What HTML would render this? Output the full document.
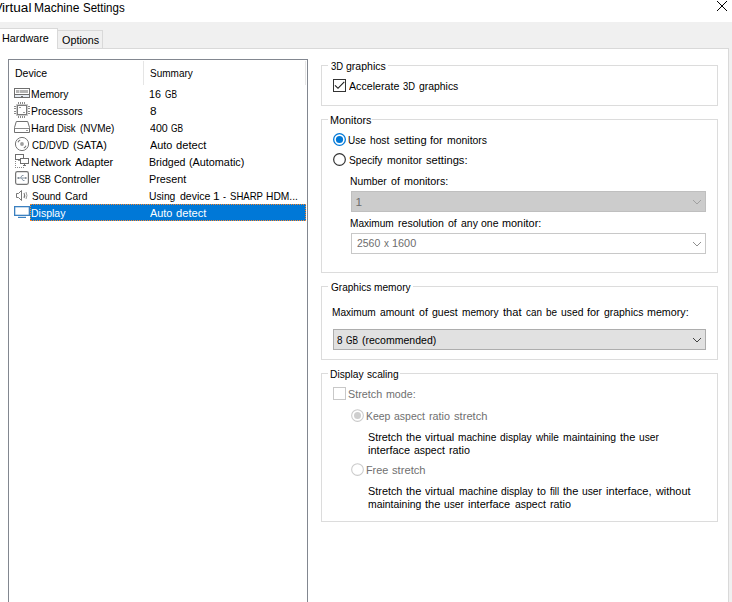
<!DOCTYPE html>
<html><head><meta charset="utf-8">
<style>
html,body{margin:0;padding:0;}
body{width:732px;height:602px;overflow:hidden;background:#f0f0f0;position:relative;font-family:"Liberation Sans",sans-serif;font-size:11.75px;color:#000;}
.a{position:absolute;}
.t{position:absolute;white-space:nowrap;line-height:13px;height:13px;transform-origin:0 0;margin-top:-1px;}
.g{color:#707070;}
.gb{position:absolute;border:1px solid #dcdcdc;box-sizing:border-box;}
.gl{position:absolute;background:#fff;white-space:nowrap;line-height:13px;height:13px;padding:0 2px;}
</style></head><body>
<!-- title bar -->
<div class="a" style="left:0;top:0;width:732px;height:22px;background:#fff;"></div>
<div class="t" id="t0" style="transform:scaleX(1.0);left:-5.8px;font-size:12.5px;line-height:15px;height:15px;top:1.6px;">V</div><div class="t" id="t1" style="transform:scaleX(1.085);left:2.3px;font-size:12.5px;line-height:15px;height:15px;top:1.6px;">irtual</div><div class="t" id="t2" style="transform:scaleX(0.961);left:34.2px;font-size:12.5px;line-height:15px;height:15px;top:1.6px;">Machine</div><div class="t" id="t3" style="transform:scaleX(0.923);left:82.8px;font-size:12.5px;line-height:15px;height:15px;top:1.6px;">Settings</div>
<svg class="a" style="left:716px;top:0;" width="12" height="12" viewBox="0 0 12 12"><path d="M1 1 L11 11 M11 1 L1 11" stroke="#000" stroke-width="1" fill="none"/></svg>
<!-- tab page -->
<div class="a" style="left:-1px;top:48px;width:730px;height:560px;background:#fff;border:1px solid #d9d9d9;box-sizing:border-box;"></div>
<!-- tabs -->
<div class="a" style="left:-1px;top:28px;width:59px;height:21px;background:#fff;border:1px solid #d9d9d9;border-bottom:none;box-sizing:border-box;"></div>
<div class="a" style="left:57px;top:30px;width:46px;height:18px;background:#f0f0f0;border:1px solid #d9d9d9;border-bottom:none;box-sizing:border-box;"></div>
<div class="t" id="tab1_0" style="transform:scaleX(0.9180);left:1.98px;top:32px;">Hardware</div>
<div class="t" id="tab2_0" style="transform:scaleX(0.9175);left:61.80px;top:34px;">Options</div>
<!-- list view -->
<div class="a" style="left:8px;top:59px;width:300px;height:560px;border:1px solid #828790;box-sizing:border-box;background:#fff;"></div>
<div class="a" style="left:143px;top:61px;width:1px;height:24px;background:#e5e5e5;"></div>
<div class="a" style="left:305px;top:61px;width:1px;height:24px;background:#e5e5e5;"></div>
<div class="t" id="h1_0" style="transform:scaleX(0.8943);left:14.81px;top:67px;">Device</div>
<div class="t" id="h2_0" style="transform:scaleX(0.8510);left:149.50px;top:67px;">Summary</div>
<div class="a" style="left:30px;top:204px;width:276px;height:17px;background:#0078d7;"></div>
<div class="a" style="left:30px;top:204px;width:276px;height:17px;box-sizing:border-box;border:1px dotted #ff8728;"></div>
<div class="t" id="r1_0" style="transform:scaleX(0.8833);left:31.42px;top:88px;">Memory</div>
<div class="t" id="r2_0" style="transform:scaleX(0.8810);left:31.42px;top:105px;">Processors</div>
<div class="t" id="r3_0" style="transform:scaleX(0.9144);left:31.39px;top:122px;">Hard</div><div class="t" id="r3_1" style="transform:scaleX(0.8162);left:57.42px;top:122px;">Disk</div><div class="t" id="r3_2" style="transform:scaleX(0.8479);left:80.18px;top:122px;">(NVMe)</div>
<div class="t" id="r4_0" style="transform:scaleX(0.8233);left:32.30px;top:139px;">CD/DVD</div><div class="t" id="r4_1" style="transform:scaleX(0.9179);left:73.36px;top:139px;">(SATA)</div>
<div class="t" id="r5_0" style="transform:scaleX(0.9286);left:31.37px;top:156px;">Network</div><div class="t" id="r5_1" style="transform:scaleX(0.9268);left:75.30px;top:156px;">Adapter</div>
<div class="t" id="r6_0" style="transform:scaleX(0.7838);left:31.52px;top:173px;">USB</div><div class="t" id="r6_1" style="transform:scaleX(0.9033);left:54.33px;top:173px;">Controller</div>
<div class="t" id="r7_0" style="transform:scaleX(0.8514);left:32.30px;top:190px;">Sound</div><div class="t" id="r7_1" style="transform:scaleX(0.8784);left:65.24px;top:190px;">Card</div>
<div class="t" id="r8_0" style="transform:scaleX(0.8921);left:31.41px;top:207px;color:#fff;">Display</div>
<div class="t" id="s1_0" style="transform:scaleX(0.9133);left:149.19px;top:88px;">16</div><div class="t" id="s1_1" style="transform:scaleX(0.7033);left:165.04px;top:88px;">GB</div>
<div class="t" id="s2" style="transform:scaleX(1.0000);left:150px;top:105px;">8</div>
<div class="t" id="s3_0" style="transform:scaleX(0.9029);left:150.00px;top:122px;">400</div><div class="t" id="s3_1" style="transform:scaleX(0.7123);left:171.19px;top:122px;">GB</div>
<div class="t" id="s4_0" style="transform:scaleX(0.9265);left:150.00px;top:139px;">Auto</div><div class="t" id="s4_1" style="transform:scaleX(0.9475);left:176.28px;top:139px;">detect</div>
<div class="t" id="s5_0" style="transform:scaleX(0.9013);left:149.10px;top:156px;">Bridged</div><div class="t" id="s5_1" style="transform:scaleX(0.9206);left:189.17px;top:156px;">(Automatic)</div>
<div class="t" id="s6_0" style="transform:scaleX(0.9200);left:149.08px;top:173px;">Present</div>
<div class="t" id="s7_0" style="transform:scaleX(0.8769);left:149.12px;top:190px;">Using</div><div class="t" id="s7_1" style="transform:scaleX(0.8976);left:179.50px;top:190px;">device</div><div class="t" id="s7_2" style="transform:scaleX(1.0172);left:213.07px;top:190px;">1</div><div class="t" id="s7_3" style="transform:scaleX(0.7629);left:223.24px;top:190px;">-</div><div class="t" id="s7_4" style="transform:scaleX(0.8138);left:230.36px;top:190px;">SHARP</div><div class="t" id="s7_5" style="transform:scaleX(0.8719);left:266.11px;top:190px;">HDM...</div>
<div class="t" id="s8_0" style="transform:scaleX(0.9265);left:150.00px;top:207px;color:#fff;">Auto</div><div class="t" id="s8_1" style="transform:scaleX(0.9475);left:176.28px;top:207px;color:#fff;">detect</div>
<!-- icons placeholder -->

<svg class="a" style="left:0;top:0;" width="40" height="230" viewBox="0 0 40 230">
<!-- memory -->
<g fill="none" stroke="#6e6e6e" stroke-width="1" shape-rendering="crispEdges">
<rect x="14.5" y="88.5" width="15" height="9" fill="#fff"/>
<rect x="15" y="95" width="14" height="2" fill="#e6ecf3" stroke="none"/>
<line x1="14" y1="94.5" x2="30" y2="94.5"/>
<rect x="16" y="90" width="12" height="3" fill="#b4b4b4" stroke="none"/>
<rect x="19.4" y="90" width="0.8" height="3" fill="#dcdcdc" stroke="none"/>
<rect x="23.6" y="90" width="0.8" height="3" fill="#dcdcdc" stroke="none"/>
<rect x="21" y="96" width="2" height="1" fill="#6e6e6e" stroke="none"/>
</g>
<!-- processor -->
<g shape-rendering="crispEdges">
<rect x="16.5" y="104.5" width="11" height="11" fill="none" stroke="#c8c8c8"/>
<rect x="17.5" y="105.5" width="9" height="9" fill="#fff" stroke="#7a7a7a"/>
<g fill="#8a8a8a">
<rect x="18" y="102" width="1" height="2"/><rect x="20" y="102" width="1" height="2"/><rect x="22" y="102" width="1" height="2"/><rect x="24" y="102" width="1" height="2"/>
<rect x="18" y="116" width="1" height="2"/><rect x="20" y="116" width="1" height="2"/><rect x="22" y="116" width="1" height="2"/><rect x="24" y="116" width="1" height="2"/>
<rect x="14" y="106" width="2" height="1"/><rect x="14" y="108" width="2" height="1"/><rect x="14" y="111" width="2" height="1"/><rect x="14" y="113" width="2" height="1"/>
<rect x="28" y="106" width="2" height="1"/><rect x="28" y="108" width="2" height="1"/><rect x="28" y="111" width="2" height="1"/><rect x="28" y="113" width="2" height="1"/>
<rect x="19" y="107" width="2" height="1" fill="#9a9a9a"/>
<rect x="23" y="112" width="2" height="1" fill="#9a9a9a"/>
</g>
</g>
<!-- hard disk -->
<g fill="none" stroke="#707070" stroke-width="1">
<path d="M16.3 121.5 H27.7 L29.5 127.5 V132.5 H14.5 V127.5 Z" fill="#fff"/>
<path d="M14.5 128.5 H29.5" stroke="#8a8a8a"/>
<rect x="26" y="130" width="2" height="1" fill="#9a9a9a" stroke="none"/>
</g>
<!-- cd -->
<g fill="none" stroke="#757575" stroke-width="1">
<circle cx="22" cy="144" r="6.6" fill="#fff"/>
<circle cx="22" cy="144" r="1.9" fill="#9e9e9e" stroke="none"/>
<path d="M18 142.2 A4.4 4.4 0 0 1 20.2 140" stroke="#777" stroke-width="1.1"/>
<path d="M26 145.8 A4.4 4.4 0 0 1 23.8 148" stroke="#777" stroke-width="1.1"/>
</g>
<!-- network -->
<g fill="none" stroke="#6e6e6e" stroke-width="1" shape-rendering="crispEdges">
<rect x="15.5" y="154.5" width="8" height="5" fill="#fff"/>
<rect x="20.5" y="158.5" width="8" height="5" fill="#fff"/>
<line x1="24.5" y1="164" x2="24.5" y2="166"/>
<line x1="23" y1="165.5" x2="26" y2="165.5"/>
<line x1="18" y1="160.5" x2="20" y2="160.5" stroke="#9a9a9a"/>
<g fill="#8a8a8a" stroke="none">
<rect x="15" y="161" width="1" height="1"/><rect x="15" y="163" width="1" height="1"/><rect x="15" y="165" width="1" height="1"/><rect x="15" y="167" width="1" height="1"/>
<rect x="17" y="167" width="1" height="1"/><rect x="19" y="167" width="1" height="1"/><rect x="21" y="167" width="1" height="1"/><rect x="23" y="167" width="1" height="1"/>
</g>
</g>
<!-- usb -->
<g fill="none" stroke="#747474" stroke-width="1.2">
<rect x="15.6" y="171.6" width="12.8" height="12.8" rx="1.8" fill="#fff"/>
<g stroke="#8c9aa8" stroke-width="1">
<path d="M18 178 H26"/>
<path d="M20.5 178 L22 175.5 H23.5"/>
<path d="M21.5 178 L23 180.5 H24.5"/>
</g>
<circle cx="18.3" cy="178" r="1" fill="#808890" stroke="none"/>
<rect x="25" y="177.2" width="1.6" height="1.6" fill="#808890" stroke="none"/>
</g>
<!-- sound -->
<g fill="none" stroke="#777" stroke-width="1">
<path d="M16.5 193.5 H18.5 L21.5 190.5 V200.5 L18.5 197.5 H16.5 Z" fill="#fff"/>
<path d="M24 193 Q25.4 195.5 24 198" stroke="#777" stroke-width="1.1"/>
<path d="M26 192 Q27.9 195.5 26 199" stroke="#9a9a9a"/>
</g>
<!-- display -->
<g fill="none" stroke="#3b80c0" stroke-width="1.3">
<rect x="14.65" y="206.65" width="14.7" height="8.7" fill="#fff"/>
<line x1="18" y1="217.4" x2="26" y2="217.4" stroke-width="1.2"/>
</g>
</svg>

<!-- group boxes -->
<div class="gb" style="left:321px;top:65px;width:397px;height:41px;"></div>
<div class="gl" style="left:328px;top:60px;width:60px;padding:0;"><span class="t" id="g1_0" style="transform:scaleX(0.8073);left:2.50px;top:0;">3D</span><span class="t" id="g1_1" style="transform:scaleX(0.8944);left:17.85px;top:0;">graphics</span></div>
<div class="gb" style="left:321px;top:119px;width:397px;height:154px;"></div>
<div class="gl" style="left:328px;top:114px;width:44px;padding:0;"><span class="t" id="g2_0" style="transform:scaleX(0.9205);left:1.58px;top:0;">Monitors</span></div>
<div class="gb" style="left:321px;top:286px;width:397px;height:74px;"></div>
<div class="gl" style="left:328px;top:281px;width:85px;padding:0;"><span class="t" id="g3_0" style="transform:scaleX(0.8542);left:2.50px;top:0;">Graphics</span><span class="t" id="g3_1" style="transform:scaleX(0.8637);left:45.86px;top:0;">memory</span></div>
<div class="gb" style="left:321px;top:373px;width:397px;height:149px;"></div>
<div class="gl" style="left:328px;top:368px;width:72px;padding:0;"><span class="t" id="g4_0" style="transform:scaleX(0.8697);left:1.63px;top:0;">Display</span><span class="t" id="g4_1" style="transform:scaleX(0.8624);left:38.75px;top:0;">scaling</span></div>
<!-- 3D graphics -->
<div class="a" style="left:333px;top:79px;width:13px;height:13px;box-sizing:border-box;border:1px solid #333;background:#fff;"></div>
<svg class="a" style="left:333px;top:79px;" width="13" height="13" viewBox="0 0 13 13"><path d="M2 6.4 L5 9.3 L11.3 2.9" stroke="#1a1a1a" stroke-width="1.15" fill="none"/></svg>
<div class="t" id="c1_0" style="transform:scaleX(0.9074);left:349.20px;top:80px;">Accelerate</div><div class="t" id="c1_1" style="transform:scaleX(0.7985);left:403.10px;top:80px;">3D</div><div class="t" id="c1_2" style="transform:scaleX(0.8847);left:419.07px;top:80px;">graphics</div>
<!-- Monitors -->
<svg class="a" style="left:333px;top:133px;" width="13" height="13" viewBox="0 0 13 13"><circle cx="6.5" cy="6.5" r="5.85" fill="#fff" stroke="#0078d7" stroke-width="1.3"/><circle cx="6.5" cy="6.5" r="3.6" fill="#0078d7"/></svg>
<div class="t" id="m1_0" style="transform:scaleX(0.8500);left:348.35px;top:134px;">Use</div><div class="t" id="m1_1" style="transform:scaleX(0.8696);left:370.20px;top:134px;">host</div><div class="t" id="m1_2" style="transform:scaleX(0.9412);left:394.20px;top:134px;">setting</div><div class="t" id="m1_3" style="transform:scaleX(0.9286);left:430.20px;top:134px;">for</div><div class="t" id="m1_4" style="transform:scaleX(0.8889);left:447.20px;top:134px;">monitors</div>
<svg class="a" style="left:333px;top:153px;" width="13" height="13" viewBox="0 0 13 13"><circle cx="6.5" cy="6.5" r="5.85" fill="#fff" stroke="#333" stroke-width="1.2"/></svg>
<div class="t" id="m2_0" style="transform:scaleX(0.8674);left:349.20px;top:154px;">Specify</div><div class="t" id="m2_1" style="transform:scaleX(0.8929);left:387.01px;top:154px;">monitor</div><div class="t" id="m2_2" style="transform:scaleX(0.9486);left:425.81px;top:154px;">settings:</div>
<div class="t" id="m3_0" style="transform:scaleX(0.8771);left:349.92px;top:175px;">Number</div><div class="t" id="m3_1" style="transform:scaleX(0.8991);left:390.76px;top:175px;">of</div><div class="t" id="m3_2" style="transform:scaleX(0.9157);left:403.75px;top:175px;">monitors:</div>
<div class="a" style="left:351px;top:191px;width:355px;height:21px;box-sizing:border-box;border:1px solid #bfbfbf;background:#cccccc;"></div>
<div class="t g" id="m4" style="color:#6d6d6d;transform:scaleX(1.0000);left:355.5px;top:196px;">1</div>
<svg class="a" style="left:692px;top:199px;" width="10" height="7" viewBox="0 0 10 7"><path d="M1 1 L5 5 L9 1" stroke="#a0a0a0" stroke-width="1" fill="none"/></svg>
<div class="t" id="m5_0" style="transform:scaleX(0.8573);left:350.04px;top:217px;">Maximum</div><div class="t" id="m5_1" style="transform:scaleX(0.8991);left:397.75px;top:217px;">resolution</div><div class="t" id="m5_2" style="transform:scaleX(0.8972);left:447.60px;top:217px;">of</div><div class="t" id="m5_3" style="transform:scaleX(0.8919);left:460.55px;top:217px;">any</div><div class="t" id="m5_4" style="transform:scaleX(0.8919);left:481.49px;top:217px;">one</div><div class="t" id="m5_5" style="transform:scaleX(0.9257);left:502.42px;top:217px;">monitor:</div>
<div class="a" style="left:351px;top:233px;width:355px;height:21px;box-sizing:border-box;border:1px solid #c8c8c8;background:#fff;"></div>
<div class="t" id="m6_0" style="transform:scaleX(0.8891);left:357.10px;top:237px;color:#6d6d6d;">2560</div><div class="t" id="m6_1" style="transform:scaleX(0.8376);left:384.24px;top:237px;color:#6d6d6d;">x</div><div class="t" id="m6_2" style="transform:scaleX(0.9247);left:392.36px;top:237px;color:#6d6d6d;">1600</div>
<svg class="a" style="left:692px;top:241px;" width="10" height="7" viewBox="0 0 10 7"><path d="M1 1 L5 5 L9 1" stroke="#8f8f8f" stroke-width="1" fill="none"/></svg>
<!-- Graphics memory -->
<div class="t" id="gm1_0" style="transform:scaleX(0.8600);left:332.14px;top:306px;">Maximum</div><div class="t" id="gm1_1" style="transform:scaleX(0.8750);left:380.00px;top:306px;">amount</div><div class="t" id="gm1_2" style="transform:scaleX(0.9000);left:419.00px;top:306px;">of</div><div class="t" id="gm1_3" style="transform:scaleX(0.8966);left:432.00px;top:306px;">guest</div><div class="t" id="gm1_4" style="transform:scaleX(0.8605);left:462.00px;top:306px;">memory</div><div class="t" id="gm1_5" style="transform:scaleX(0.9500);left:503.00px;top:306px;">that</div><div class="t" id="gm1_6" style="transform:scaleX(0.8421);left:526.00px;top:306px;">can</div><div class="t" id="gm1_7" style="transform:scaleX(0.8462);left:546.00px;top:306px;">be</div><div class="t" id="gm1_8" style="transform:scaleX(0.8800);left:561.00px;top:306px;">used</div><div class="t" id="gm1_9" style="transform:scaleX(0.9286);left:587.00px;top:306px;">for</div><div class="t" id="gm1_10" style="transform:scaleX(0.8864);left:604.00px;top:306px;">graphics</div><div class="t" id="gm1_11" style="transform:scaleX(0.9111);left:647.00px;top:306px;">memory:</div>
<div class="a" style="left:333px;top:329px;width:373px;height:21px;box-sizing:border-box;border:1px solid #adadad;background:#e1e1e1;"></div>
<div class="t" id="gm2_0" style="transform:scaleX(0.8367);left:337.00px;top:334px;">8</div><div class="t" id="gm2_1" style="transform:scaleX(0.7087);left:346.04px;top:334px;">GB</div><div class="t" id="gm2_2" style="transform:scaleX(0.8952);left:362.10px;top:334px;">(recommended)</div>
<svg class="a" style="left:692px;top:337px;" width="10" height="7" viewBox="0 0 10 7"><path d="M1 1 L5 5 L9 1" stroke="#404040" stroke-width="1" fill="none"/></svg>
<!-- Display scaling -->
<div class="a" style="left:333px;top:387px;width:13px;height:13px;box-sizing:border-box;border:1px solid #c8c8c8;background:#fff;"></div>
<div class="t g" id="d1_0" style="transform:scaleX(0.9189);left:348.00px;top:388px;">Stretch</div><div class="t g" id="d1_1" style="transform:scaleX(0.9062);left:386.00px;top:388px;">mode:</div>
<svg class="a" style="left:350.5px;top:409px;" width="13" height="13" viewBox="0 0 13 13"><circle cx="6.5" cy="6.5" r="5.85" fill="#fff" stroke="#cacaca" stroke-width="1.05"/><circle cx="6.5" cy="6.5" r="3.5" fill="#cecece"/></svg>
<div class="t g" id="d2_0" style="transform:scaleX(0.8905);left:365.51px;top:410px;">Keep</div><div class="t g" id="d2_1" style="transform:scaleX(0.8916);left:393.58px;top:410px;">aspect</div><div class="t g" id="d2_2" style="transform:scaleX(0.9191);left:428.81px;top:410px;">ratio</div><div class="t g" id="d2_3" style="transform:scaleX(0.9491);left:453.98px;top:410px;">stretch</div>
<div class="t" id="d3_0" style="transform:scaleX(0.9186);left:368.00px;top:431px;">Stretch</div><div class="t" id="d3_1" style="transform:scaleX(0.9372);left:405.99px;top:431px;">the</div><div class="t" id="d3_2" style="transform:scaleX(0.9352);left:424.98px;top:431px;">virtual</div><div class="t" id="d3_3" style="transform:scaleX(0.8633);left:457.97px;top:431px;">machine</div><div class="t" id="d3_4" style="transform:scaleX(0.8646);left:499.95px;top:431px;">display</div><div class="t" id="d3_5" style="transform:scaleX(0.8516);left:535.94px;top:431px;">while</div><div class="t" id="d3_6" style="transform:scaleX(0.8830);left:562.93px;top:431px;">maintaining</div><div class="t" id="d3_7" style="transform:scaleX(0.9372);left:619.91px;top:431px;">the</div><div class="t" id="d3_8" style="transform:scaleX(0.8693);left:638.91px;top:431px;">user</div>
<div class="t" id="d4_0" style="transform:scaleX(0.9370);left:368.00px;top:444px;">interface</div><div class="t" id="d4_1" style="transform:scaleX(0.8892);left:414.18px;top:444px;">aspect</div><div class="t" id="d4_2" style="transform:scaleX(0.9166);left:449.32px;top:444px;">ratio</div>
<svg class="a" style="left:350.5px;top:463px;" width="13" height="13" viewBox="0 0 13 13"><circle cx="6.5" cy="6.5" r="5.85" fill="#fff" stroke="#cacaca" stroke-width="1.05"/></svg>
<div class="t g" id="d5_0" style="transform:scaleX(0.9225);left:366.48px;top:464px;">Free</div><div class="t g" id="d5_1" style="transform:scaleX(0.9526);left:391.66px;top:464px;">stretch</div>
<div class="t" id="d6_0" style="transform:scaleX(0.9246);left:368.00px;top:485px;">Stretch</div><div class="t" id="d6_1" style="transform:scaleX(0.9433);left:406.24px;top:485px;">the</div><div class="t" id="d6_2" style="transform:scaleX(0.9413);left:425.36px;top:485px;">virtual</div><div class="t" id="d6_3" style="transform:scaleX(0.8690);left:458.56px;top:485px;">machine</div><div class="t" id="d6_4" style="transform:scaleX(0.8703);left:500.82px;top:485px;">display</div><div class="t" id="d6_5" style="transform:scaleX(0.9056);left:537.05px;top:485px;">to</div><div class="t" id="d6_6" style="transform:scaleX(0.8233);left:550.13px;top:485px;">fill</div><div class="t" id="d6_7" style="transform:scaleX(0.9433);left:563.21px;top:485px;">the</div><div class="t" id="d6_8" style="transform:scaleX(0.8750);left:582.33px;top:485px;">user</div><div class="t" id="d6_9" style="transform:scaleX(0.9433);left:606.48px;top:485px;">interface,</div><div class="t" id="d6_10" style="transform:scaleX(0.9268);left:655.78px;top:485px;">without</div>
<div class="t" id="d7_0" style="transform:scaleX(0.8873);left:368.00px;top:498px;">maintaining</div><div class="t" id="d7_1" style="transform:scaleX(0.9417);left:425.25px;top:498px;">the</div><div class="t" id="d7_2" style="transform:scaleX(0.8734);left:444.34px;top:498px;">user</div><div class="t" id="d7_3" style="transform:scaleX(0.9375);left:468.45px;top:498px;">interface</div><div class="t" id="d7_4" style="transform:scaleX(0.8897);left:514.65px;top:498px;">aspect</div><div class="t" id="d7_5" style="transform:scaleX(0.9171);left:549.81px;top:498px;">ratio</div>
</body></html>
